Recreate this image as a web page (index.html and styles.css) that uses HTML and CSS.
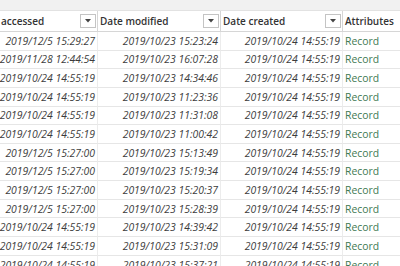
FILE: index.html
```html
<!DOCTYPE html>
<html>
<head>
<meta charset="utf-8">
<link rel="stylesheet" href="styles.css">
</head>
<body>
<div class="topband"></div>
<div class="grid">
  <div class="hcell"><span class="htext">accessed</span><span class="dd"><svg width="6" height="4" viewBox="0 0 6 4"><path d="M0 0H6L3 3.5Z" fill="#444"/></svg></span></div>
  <div class="hcell"><span class="htext">Date modified</span><span class="dd"><svg width="6" height="4" viewBox="0 0 6 4"><path d="M0 0H6L3 3.5Z" fill="#444"/></svg></span></div>
  <div class="hcell"><span class="htext">Date created</span><span class="dd"><svg width="6" height="4" viewBox="0 0 6 4"><path d="M0 0H6L3 3.5Z" fill="#444"/></svg></span></div>
  <div class="hcell last"><span class="htext">Attributes</span></div>

  <div class="c d">2019/12/5 15:29:27</div><div class="c d">2019/10/23 15:23:24</div><div class="c d">2019/10/24 14:55:19</div><div class="c r">Record</div>
  <div class="c d">2019/11/28 12:44:54</div><div class="c d">2019/10/23 16:07:28</div><div class="c d">2019/10/24 14:55:19</div><div class="c r">Record</div>
  <div class="c d">2019/10/24 14:55:19</div><div class="c d">2019/10/23 14:34:46</div><div class="c d">2019/10/24 14:55:19</div><div class="c r">Record</div>
  <div class="c d">2019/10/24 14:55:19</div><div class="c d">2019/10/23 11:23:36</div><div class="c d">2019/10/24 14:55:19</div><div class="c r">Record</div>
  <div class="c d">2019/10/24 14:55:19</div><div class="c d">2019/10/23 11:31:08</div><div class="c d">2019/10/24 14:55:19</div><div class="c r">Record</div>
  <div class="c d">2019/10/24 14:55:19</div><div class="c d">2019/10/23 11:00:42</div><div class="c d">2019/10/24 14:55:19</div><div class="c r">Record</div>
  <div class="c d">2019/12/5 15:27:00</div><div class="c d">2019/10/23 15:13:49</div><div class="c d">2019/10/24 14:55:19</div><div class="c r">Record</div>
  <div class="c d">2019/12/5 15:27:00</div><div class="c d">2019/10/23 15:19:34</div><div class="c d">2019/10/24 14:55:19</div><div class="c r">Record</div>
  <div class="c d">2019/12/5 15:27:00</div><div class="c d">2019/10/23 15:20:37</div><div class="c d">2019/10/24 14:55:19</div><div class="c r">Record</div>
  <div class="c d">2019/12/5 15:27:00</div><div class="c d">2019/10/23 15:28:39</div><div class="c d">2019/10/24 14:55:19</div><div class="c r">Record</div>
  <div class="c d">2019/10/24 14:55:19</div><div class="c d">2019/10/23 14:39:42</div><div class="c d">2019/10/24 14:55:19</div><div class="c r">Record</div>
  <div class="c d">2019/10/24 14:55:19</div><div class="c d">2019/10/23 15:31:09</div><div class="c d">2019/10/24 14:55:19</div><div class="c r">Record</div>
  <div class="c d">2019/10/24 14:55:19</div><div class="c d">2019/10/23 15:37:21</div><div class="c d">2019/10/24 14:55:19</div><div class="c r">Record</div>
</div>
</body>
</html>
```
FILE: styles.css
```css
html, body {
  margin: 0;
  padding: 0;
  background: #fff;
  width: 400px;
  height: 266px;
  overflow: hidden;
}
body {
  font-family: "Open Sans", "Noto Sans", sans-serif;
  color: #3a3a3a;
}
.topband {
  height: 11px;
  background: #f1f1f1;
  border-bottom: 1px solid #e2e2e2;
  box-sizing: border-box;
}
.grid {
  display: grid;
  grid-template-columns: 98px 123px 122px 80px;
  grid-auto-rows: 18.65px;
  grid-template-rows: 21px;
}
.hcell {
  display: flex;
  align-items: center;
  justify-content: space-between;
  border-right: 1px solid #d6d6d6;
  border-bottom: 1px solid #d6d6d6;
  padding: 0 1px 0 2px;
  font-size: 10px;
  font-weight: 600;
  color: #333;
  white-space: nowrap;
  overflow: hidden;
}
.grid .hcell:first-child {
  padding-left: 1px;
}
.hcell.last {
  border-right: none;
}
.dd {
  width: 14px;
  height: 12px;
  border: 1px solid #c4c4c4;
  display: flex;
  align-items: center;
  justify-content: center;
  flex: none;
}
.c {
  display: flex;
  align-items: center;
  border-right: 1px solid #ececec;
  border-bottom: 1px solid #e6e6e6;
  font-size: 10.4px;
  white-space: nowrap;
  overflow: hidden;
}
.d {
  justify-content: flex-end;
  font-style: italic;
  padding-right: 2px;
  color: #3c3c3c;
}
.r {
  padding-left: 2px;
  color: #3f7a52;
  border-right: none;
}
```
